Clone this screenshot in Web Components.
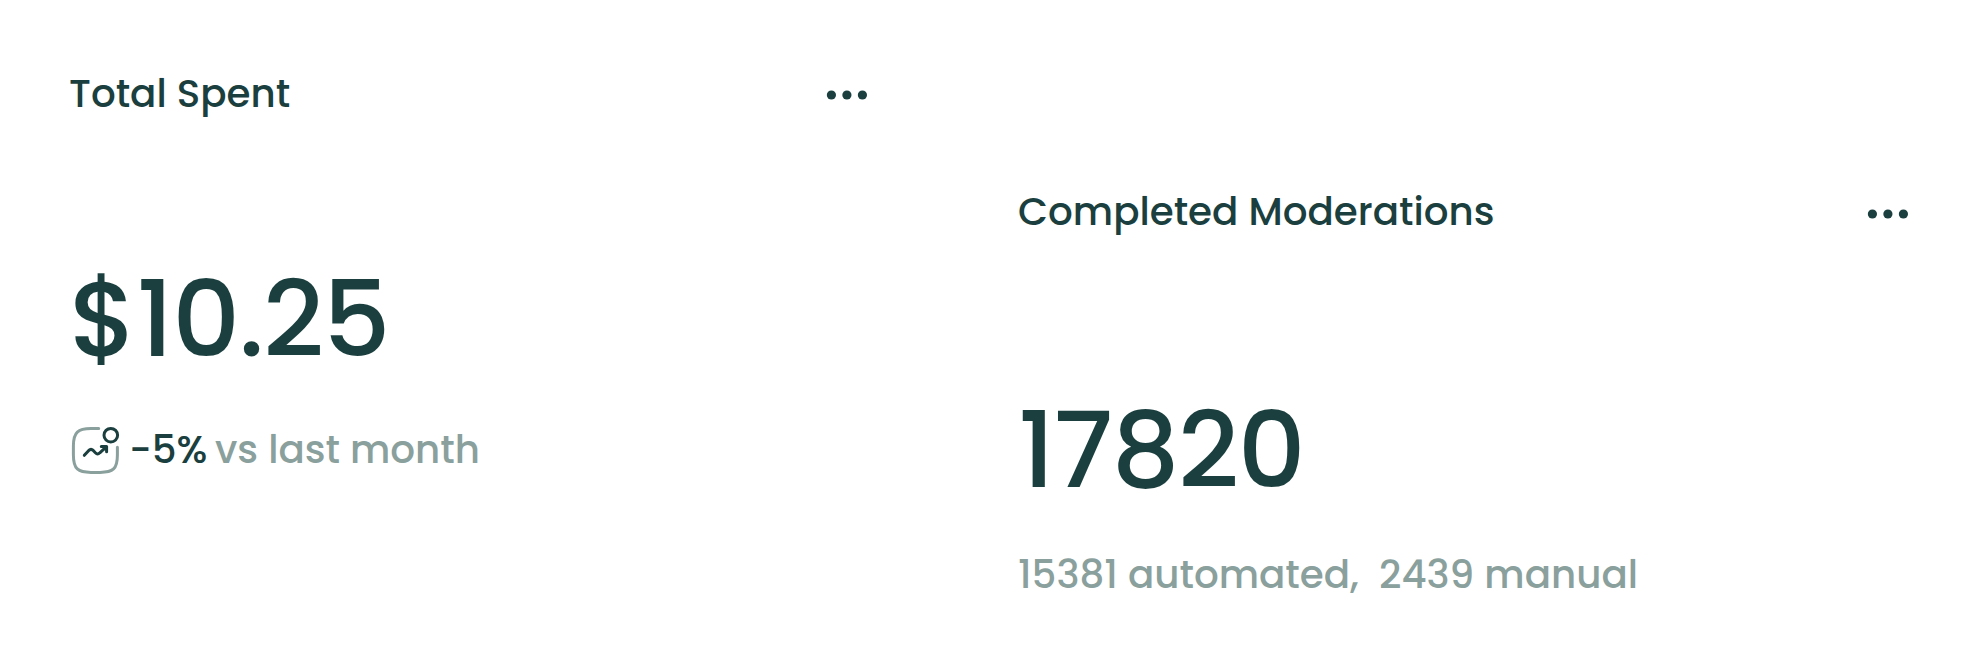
<!DOCTYPE html>
<html lang="en">
<head>
<meta charset="utf-8">
<title>Moderation stats</title>
<style>
body{margin:0;background:#fff}
b{font-weight:500;color:#1a3f3e;margin-right:-2.5px}
</style>
</head>
<body>
<stats-board>
  <stat-card class="spent">
    <span slot="title">Total Spent</span>
    <span slot="value">$10.25</span>
    <trend-icon slot="icon"></trend-icon>
    <span slot="note"><b>-5%</b> vs last month</span>
  </stat-card>
  <stat-card class="done">
    <span slot="title">Completed Moderations</span>
    <span slot="value">17820</span>
    <span slot="note">15381 automated,&nbsp; 2439 manual</span>
  </stat-card>
</stats-board>
<script>
const define=(name,html)=>customElements.define(name,class extends HTMLElement{
  constructor(){super();this.attachShadow({mode:'open'}).innerHTML=html}
});
define('stats-board',`<style>
:host{display:grid;grid-template-columns:948px 1fr;width:1977px;height:660px;background:#fff;color:#1a3f3e;overflow:hidden}
</style><slot></slot>`);
define('more-dots',`<style>:host{display:block;width:42px;height:12px}svg{display:block}</style>
<svg width="42" height="12" fill="#1a3f3e"><circle cx="5.4" cy="6" r="4.6"/><circle cx="20.9" cy="6" r="4.6"/><circle cx="36.4" cy="6" r="4.6"/></svg>`);
define('trend-icon',`<style>:host{display:block;width:50px;height:49px}svg{display:block}</style>
<svg width="50" height="49" viewBox="71 425 50 49" fill="none" stroke-linecap="round" stroke-linejoin="round" stroke-width="3">
<path stroke="#8aa09d" d="M98.7 428.6H91C78 428.6 73.4 432 73.4 446V455C73.4 469 78 472.4 91 472.4H100C113 472.4 117.4 469 117.4 455V447.2"/>
<circle stroke="#1a3f3e" cx="110.8" cy="435.2" r="6.8"/>
<path stroke="#1a3f3e" d="M84.3 455.3L88.8 450.4Q91 448.2 93.2 450.4L95.4 452.8Q97.6 455 99.8 452.8L106.5 446.6M101.3 446.5H106.6V451.8"/></svg>`);
define('stat-card',`<style>
:host{display:flex;flex-direction:column;box-sizing:border-box;font:500 38.85px/49px Poppins,Inter,sans-serif;white-space:nowrap;padding:69px 80px 0 69px}
:host(.done){padding:187px 68px 0 70px}
header{display:flex;justify-content:space-between;align-items:center}
more-dots{margin-top:2px}
:host(.done) more-dots{margin-top:4px}
.value{display:flex;font-size:106px;line-height:128px;letter-spacing:-1.4px;margin-top:137px}
.note{display:flex;align-items:center;color:#8aa09d;margin-top:42px;gap:8px}
::slotted([slot=icon]){margin-left:2px}
:host(.done) .value{margin-top:150px}
:host(.done) .note{margin-top:36px}
</style>
<header><slot name="title"></slot><more-dots></more-dots></header>
<div class="value"><slot name="value"></slot></div>
<div class="note"><slot name="icon"></slot><slot name="note"></slot></div>`);
</script>
</body>
</html>
